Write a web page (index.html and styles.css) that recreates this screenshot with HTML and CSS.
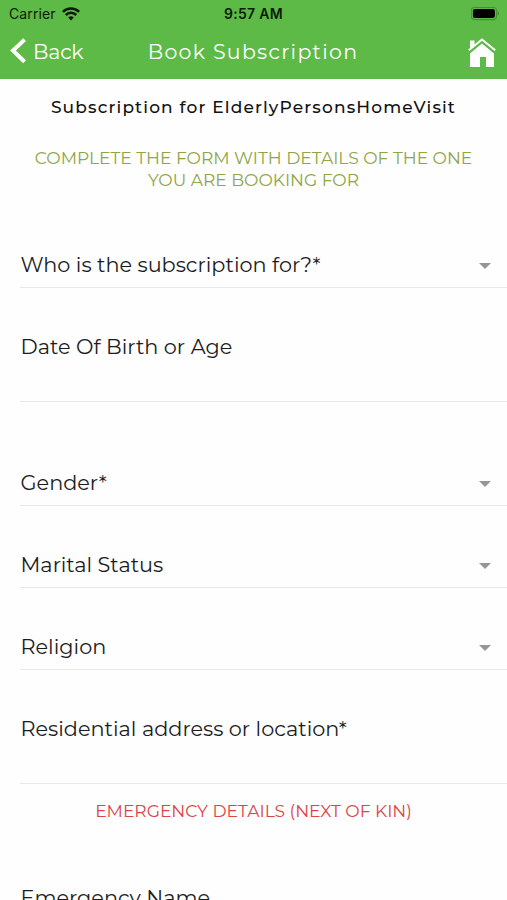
FILE: index.html
```html
<!DOCTYPE html>
<html lang="en">
<head>
  <meta charset="UTF-8">
  <title>Book Subscription</title>
  <link rel="stylesheet" href="styles.css">
</head>
<body>
  <header class="header">
    <div class="status-bar">
      <div class="carrier">
        <span>Carrier</span>
        <svg width="18" height="14" viewBox="0 0 18 14" fill="none" stroke="#0a1a06" stroke-width="2.5">
          <path d="M.9 4.8a11.5 11.5 0 0 1 16.2 0M3.8 8a7.3 7.3 0 0 1 10.4 0"/>
          <path d="M9 13.4L6.2 10.5a4 4 0 0 1 5.6 0z" fill="#0a1a06" stroke="none"/>
        </svg>
      </div>
      <div class="time">9:57 AM</div>
      <svg class="battery" width="30" height="14" viewBox="0 0 30 14">
        <rect x=".2" y=".3" width="25.5" height="12.4" rx="3.5" fill="none" stroke="#3c8a2b"/>
        <rect x="1.9" y="1.9" width="22" height="9.2" rx="2" fill="#000"/>
        <path d="M26.8 4.3q2.4 2.2 0 4.4z" fill="#3c8a2b"/>
      </svg>
    </div>
    <div class="nav-bar">
      <a class="back">
        <svg width="16" height="26" viewBox="0 0 16 26" fill="none" stroke="#fff" stroke-width="4">
          <path d="M14.6 1.6L3 12.6l11.6 11.200"/>
        </svg>
        <span>Back</span>
      </a>
      <h1>Book Subscription</h1>
      <svg class="home" width="28" height="30" viewBox="0 0 28 30" fill="#fff">
        <path d="M2 3.500h4.500v5L2 12.500z"/>
        <path d="M14 6.500L26 16.500v13.500h-8V20h-6v10H2V16.500z"/>
        <path d="M.8 13.300L14 2.500l13.200 10.800" fill="none" stroke="#fff" stroke-width="2"/>
      </svg>
    </div>
  </header>
  <main>
    <h2>Subscription for ElderlyPersonsHomeVisit</h2>
    <p class="intro">COMPLETE THE FORM WITH DETAILS OF THE ONE<br>YOU ARE BOOKING FOR</p>
    <form>
      <div class="field select"><label>Who is the subscription for?*</label><i class="arrow"></i></div>
      <div class="field text birth"><label>Date Of Birth or Age</label></div>
      <div class="field select"><label>Gender*</label><i class="arrow"></i></div>
      <div class="field select"><label>Marital Status</label><i class="arrow"></i></div>
      <div class="field select"><label>Religion</label><i class="arrow"></i></div>
      <div class="field text"><label>Residential address or location*</label></div>
      <h3>EMERGENCY DETAILS (NEXT OF KIN)</h3>
      <div class="field text"><label>Emergency Name</label></div>
    </form>
  </main>
</body>
</html>
```
FILE: styles.css
```css
* { box-sizing: border-box; }
body { margin: 0; height: 900px; overflow: hidden; background-color: #fefefe; color: #1c1c1e; font-family: Montserrat, Inter, sans-serif; }
h1, h2, h3, p { margin: 0; font-weight: 400; }
svg { display: block; }

.header { height: 79px; background-color: #5dba47; color: #fff; }
.status-bar { display: grid; grid-template-columns: 1fr auto 1fr; align-items: center; height: 26px; padding: 1px 6px 0 9px; color: #0a1a06; font-family: Inter, sans-serif; font-size: 14px; }
.carrier { display: flex; align-items: center; gap: 6px; letter-spacing: 0.1px; }
.time { margin-right: 3px; font-weight: 600; letter-spacing: 0.3px; }
.battery { justify-self: end; }
.nav-bar { display: grid; grid-template-columns: 1fr auto 1fr; align-items: center; height: 50px; padding: 0 11px 0 10px; }
.back { display: flex; align-items: center; gap: 7px; font-size: 20.5px; }
.back span { letter-spacing: -0.2px; }
h1 { font-size: 20.5px; letter-spacing: 1.3px; }
.home { justify-self: end; margin-top: 2px; }

h2 { padding-top: 17px; font-size: 17px; line-height: 22px; letter-spacing: 1.14px; font-weight: 500; text-align: center; color: #111; }
.intro { margin-top: 29px; font-size: 17.1px; line-height: 22px; text-align: center; color: #8fa548; }

form { padding: 52px 0 0 20px; }
.field { display: flex; justify-content: space-between; align-items: flex-start; border-bottom: 1px solid #e8e8e8; padding: 0 16px 0 0.5px; margin-bottom: 37.1px; }
.select { height: 45px; }
.text { height: 77px; }
.birth { margin-bottom: 59px; }
label { font-size: 20.8px; line-height: 44px; white-space: nowrap; }
.arrow { margin-top: 20px; border: 6px solid transparent; border-top-color: #969696; border-bottom: 0; }
h3 { margin: -22px 20px 53px 0; font-size: 17.1px; line-height: 24px; text-align: center; color: #dc4545; }
```
